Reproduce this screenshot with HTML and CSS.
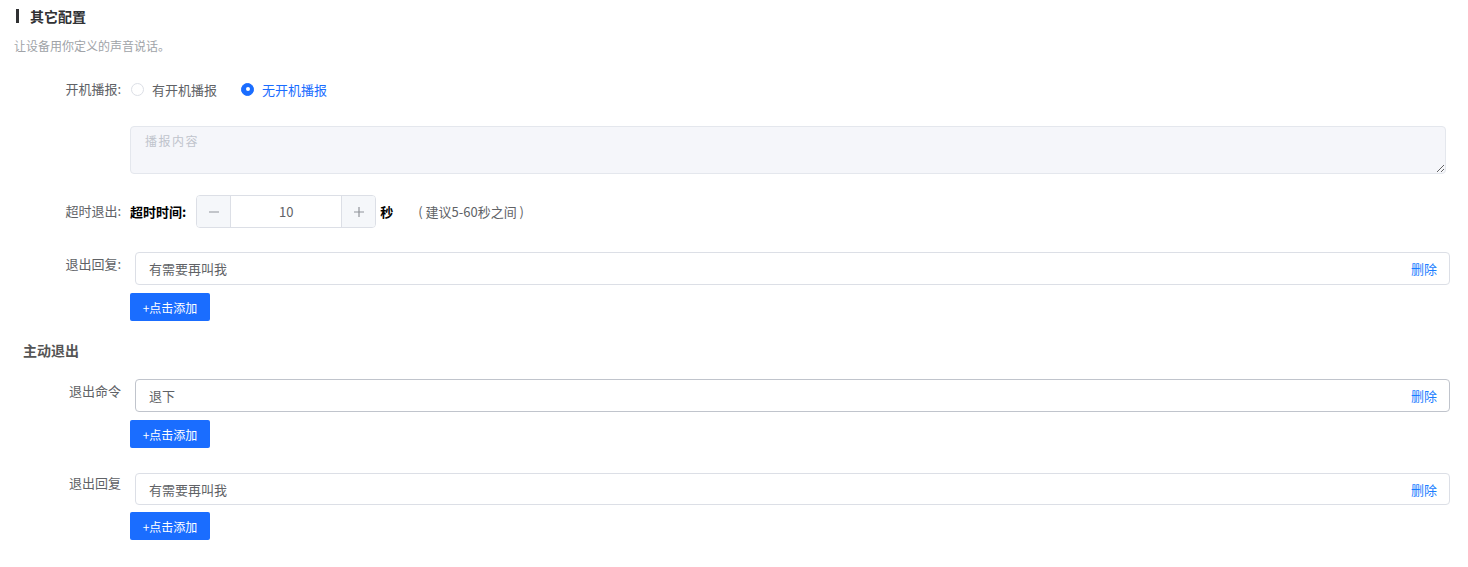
FILE: index.html
```html
<!DOCTYPE html>
<html lang="zh-CN">
<head>
<meta charset="utf-8">
<title>其它配置</title>
<link rel="stylesheet" href="styles.css">
</head>
<body>
<div class="page">
  <div class="section-title"><span class="bar"></span><span>其它配置</span></div>
  <div class="desc">让设备用你定义的声音说话。</div>

  <div class="row row-radio">
    <div class="label">开机播报:</div>
    <div class="content radios">
      <label class="radio"><span class="dot"></span><span>有开机播报</span></label>
      <label class="radio checked"><span class="dot"></span><span>无开机播报</span></label>
    </div>
  </div>

  <div class="row row-textarea">
    <div class="label"></div>
    <div class="content">
      <textarea class="ta" placeholder="播报内容"></textarea>
    </div>
  </div>

  <div class="row row-timeout">
    <div class="label">超时退出:</div>
    <div class="content timeout">
      <span class="strong">超时时间:</span>
      <div class="stepper">
        <span class="step">
          <svg width="12" height="12" viewBox="0 0 12 12"><path d="M1 6h10" stroke="#909399" stroke-width="1.2"/></svg>
        </span>
        <span class="num">10</span>
        <span class="step">
          <svg width="12" height="12" viewBox="0 0 12 12"><path d="M1 6h10M6 1v10" stroke="#909399" stroke-width="1.2"/></svg>
        </span>
      </div>
      <span class="strong unit">秒</span>
      <span class="hint">( 建议5-60秒之间 )</span>
    </div>
  </div>

  <div class="row row-list first-list">
    <div class="label">退出回复:</div>
    <div class="content">
      <div class="item"><span>有需要再叫我</span><a class="del">删除</a></div>
      <button class="add">+点击添加</button>
    </div>
  </div>

  <div class="sub-title">主动退出</div>

  <div class="row row-list list-cmd">
    <div class="label">退出命令</div>
    <div class="content">
      <div class="item hover"><span>退下</span><a class="del">删除</a></div>
      <button class="add">+点击添加</button>
    </div>
  </div>

  <div class="row row-list list-reply">
    <div class="label">退出回复</div>
    <div class="content">
      <div class="item short"><span>有需要再叫我</span><a class="del">删除</a></div>
      <button class="add last">+点击添加</button>
    </div>
  </div>
</div>
</body>
</html>
```

FILE: styles.css
```css
* { box-sizing: border-box; }
html, body { margin: 0; padding: 0; background: #fff; }
body {
  font-family: "Microsoft YaHei", "Noto Sans CJK SC", "Noto Sans", sans-serif;
  font-size: 13px;
  color: #606266;
}
.page { width: 1468px; height: 567px; overflow: hidden; }

.section-title {
  display: flex;
  align-items: center;
  height: 32px;
  padding-left: 16px;
  font-size: 14px;
  font-weight: bold;
  color: #303133;
}
.section-title .bar {
  width: 3px;
  height: 14px;
  background: #303133;
  margin-right: 11px;
}
.desc {
  margin-top: 4px;
  padding-left: 14px;
  font-size: 12px;
  line-height: 20px;
  color: #a0a3a8;
}

.row { display: flex; }
.label {
  width: 121px;
  flex: none;
  text-align: right;
  line-height: 20px;
  color: #606266;
}
.content { margin-left: 9px; flex: 1; width: 1320px; }

.row-radio { margin-top: 23px; }
.radios { display: flex; align-items: center; height: 20px; }
.radio { display: flex; align-items: center; margin-right: 23px; color: #606266; }
.radio .dot {
  width: 13px; height: 13px;
  border: 1px solid #dcdfe6;
  border-radius: 50%;
  margin: 0 8px 0 1px;
  background: #fff;
  position: relative;
}
.radio.checked { color: #1a6dff; }
.radio.checked .dot { border-color: #1a6dff; background: #1a6dff; }
.radio.checked .dot::after {
  content: "";
  position: absolute;
  left: 3.5px; top: 3.5px;
  width: 4px; height: 4px;
  border-radius: 50%;
  background: #fff;
}

.row-textarea { margin-top: 27px; }
.ta {
  display: block;
  width: 1316px;
  height: 48px;
  border: 1px solid #e4e7ed;
  border-radius: 4px;
  background: #f5f6fa;
  padding: 4px 14px;
  font-family: inherit;
  font-size: 12px;
  line-height: 20px;
  letter-spacing: 1.5px;
  color: #606266;
  outline: none;
}
.ta::placeholder { color: #c0c4cc; }

.row-timeout { margin-top: 21px; }
.row-timeout .label { line-height: 32px; }
.timeout { display: flex; align-items: center; height: 33px; }
.strong { font-weight: bold; color: #000; }
.stepper {
  display: flex;
  margin-left: 10px;
  width: 180px;
  height: 33px;
  border: 1px solid #dcdfe6;
  border-radius: 4px;
  overflow: hidden;
}
.step {
  width: 34px;
  flex: none;
  display: flex;
  align-items: center;
  justify-content: center;
  background: #f5f7fa;
}
.step:first-child { border-right: 1px solid #dcdfe6; }
.step:last-child { border-left: 1px solid #dcdfe6; }
.num {
  flex: 1;
  display: flex;
  align-items: center;
  justify-content: center;
  color: #606266;
}
.unit { margin-left: 4px; }
.hint { margin-left: 25px; color: #606266; }

.row-list .label { padding-top: 2px; }
.first-list { margin-top: 24px; }
.item {
  margin-left: 5px;
  width: 1315px;
  height: 33px;
  border: 1px solid #dcdfe6;
  border-radius: 4px;
  display: flex;
  align-items: center;
  justify-content: space-between;
  padding: 0 12px 0 13px;
  color: #606266;
}
.item.hover { border-color: #c0c4cc; }
.item.short { height: 32px; }
.del { color: #1a7dff; cursor: pointer; }
.add {
  display: block;
  margin-top: 8px;
  width: 80px;
  height: 28px;
  border: none;
  border-radius: 2px;
  background: #1a6dff;
  color: #fff;
  font-family: inherit;
  font-size: 12px;
  padding: 0;
}
.add.last { margin-top: 7px; }

.sub-title {
  margin-top: 19px;
  padding-left: 23px;
  font-size: 14px;
  font-weight: bold;
  line-height: 20px;
  color: #555;
}
.list-cmd { margin-top: 19px; }
.list-reply { margin-top: 25px; }
.list-reply .label { padding-top: 0; }
```
